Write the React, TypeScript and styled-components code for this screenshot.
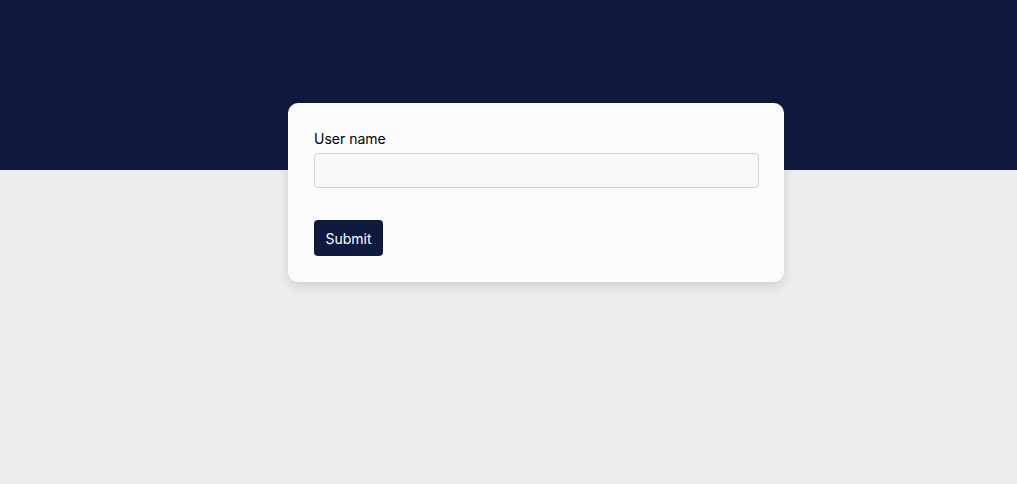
import styled, { createGlobalStyle } from "styled-components";

const GlobalStyle = createGlobalStyle`
  html, body {
    margin: 0;
    padding: 0;
  }
  body {
    min-height: 100vh;
    background: linear-gradient(to bottom, #0f1a3e 0, #0f1a3e 170px, #eeeeee 170px);
    font-family: Inter, "Open Sans", "Liberation Sans", sans-serif;
  }
`;

export default function App() {
  return (
    <>
      <GlobalStyle />
      <Page>
        <Card onSubmit={(e) => e.preventDefault()}>
          <Field>
            <Label htmlFor="username">User name</Label>
            <Input id="username" type="text" />
          </Field>
          <SubmitButton type="submit">Submit</SubmitButton>
        </Card>
      </Page>
    </>
  );
}

const Page = styled.div`
  padding: 103px 0 0 288px;
`;

const Card = styled.form`
  width: 496px;
  box-sizing: border-box;
  padding: 27px 25px 26px 26px;
  background: #fcfcfc;
  border-radius: 10px;
  box-shadow: 0 4px 12px rgba(0, 0, 0, 0.14);
  display: flex;
  flex-direction: column;
  align-items: flex-start;
  gap: 32px;
`;

const Field = styled.div`
  display: flex;
  flex-direction: column;
  gap: 5px;
  width: 100%;
`;

const Label = styled.label`
  font-size: 14px;
  font-weight: 400;
  line-height: 18px;
  color: #000000;
`;

const Input = styled.input`
  box-sizing: border-box;
  width: 100%;
  height: 35px;
  border: 1px solid #d2d2d2;
  border-radius: 4px;
  background: #f8f8f8;
  padding: 0 10px;
  font: inherit;
  outline: none;
`;

const SubmitButton = styled.button`
  height: 36px;
  width: 69px;
  padding: 0;
  border: none;
  border-radius: 4px;
  background: #0f1a3e;
  color: #ffffff;
  font-family: Inter, "Open Sans", "Liberation Sans", sans-serif;
  font-size: 14px;
  cursor: pointer;
`;
